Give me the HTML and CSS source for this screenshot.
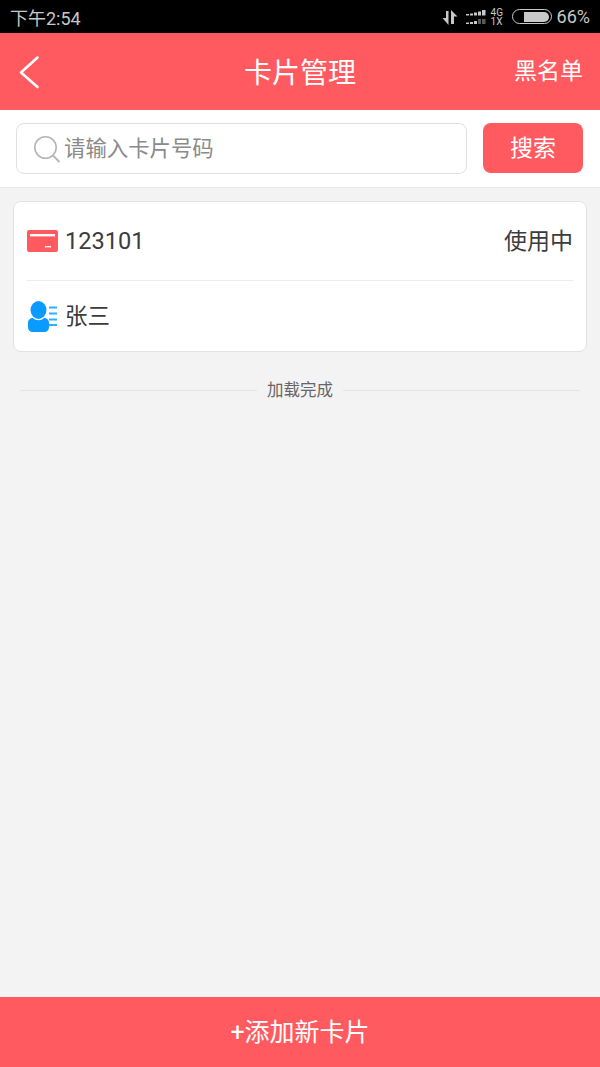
FILE: index.html
```html
<!DOCTYPE html>
<html lang="zh">
<head>
<meta charset="utf-8">
<title>卡片管理</title>
<link rel="stylesheet" href="styles.css">
</head>
<body>
<div class="app">
  <div class="status">
    <span class="time">下午2:54</span>
    <div class="status-right">
      <svg class="ic-data" width="16" height="16" viewBox="0 0 16 16"><path d="M0.500 9h3.500V2h2.500v14zM9 15V1l6.500 6.500H12V15z" fill="#c8c8c8"/></svg>
      <svg class="ic-signal" width="22" height="16" viewBox="0 0 22 16"><g fill="#c8c8c8"><rect x="0" y="5" width="3" height="1.500"/><rect x="4" y="4.500" width="3" height="2"/><rect x="8" y="3.500" width="3" height="3"/><rect x="12" y="2.500" width="3" height="4"/><rect x="16" y="1" width="3.500" height="5.500"/><rect x="0" y="13.500" width="3" height="1.500"/><rect x="4" y="13" width="3" height="2"/><rect x="8" y="12" width="3" height="3"/></g><g fill="#5a5a5a"><rect x="12" y="10" width="3" height="5"/><rect x="16" y="10" width="3.500" height="5"/></g></svg>
      <div class="net"><span>4G</span><span>1X</span></div>
      <div class="battery"><div class="battery-fill"></div></div>
      <span class="pct">66%</span>
    </div>
  </div>
  <header class="nav">
    <svg class="back" width="24" height="34" viewBox="0 0 24 34"><path d="M19.500 2.500 L3 17.500 L19.500 32" fill="none" stroke="#fff" stroke-width="2.600" stroke-linecap="round" stroke-linejoin="round"/></svg>
    <h1 class="title">卡片管理</h1>
    <span class="nav-link">黑名单</span>
  </header>
  <div class="search">
    <div class="search-box">
      <svg class="search-ic" width="28" height="28" viewBox="0 0 28 28"><circle cx="12.500" cy="12.500" r="10.700" fill="none" stroke="#b5b5b5" stroke-width="1.600"/><path d="M20 20.500 L26.500 27" stroke="#b5b5b5" stroke-width="1.800" fill="none"/></svg>
      <span class="placeholder">请输入卡片号码</span>
    </div>
    <button class="search-btn">搜索</button>
  </div>
  <main class="content">
    <section class="card">
      <div class="row row-top">
        <svg class="row-ic" width="31" height="22" viewBox="0 0 31 22"><rect width="31" height="22" rx="2" fill="#ff5a5f"/><rect x="3" y="4" width="25" height="2.400" fill="#fff"/><rect x="18" y="16" width="6" height="1.400" fill="#fff"/></svg>
        <span class="row-text">123101</span>
        <span class="row-state">使用中</span>
      </div>
      <div class="row row-bottom">
        <svg class="row-ic" width="31" height="31" viewBox="0 0 31 31"><g fill="#0a9bff"><ellipse cx="11.500" cy="9" rx="8" ry="9"/><path d="M1 22c0-3 2-5 5-5 3 3 8 3 11 0 3 0 5 2 5 5v4c0 3-2 5-5 5H6c-3 0-5-2-5-5z"/></g><g fill="#2fb0ff"><rect x="22" y="5.500" width="8" height="2"/><rect x="22" y="11.500" width="8" height="2"/><rect x="22" y="17.500" width="8" height="2"/><rect x="22" y="23" width="8" height="2"/></g></svg>
        <span class="row-cn">张三</span>
      </div>
    </section>
    <div class="done"><span class="done-line"></span><span class="done-text">加载完成</span><span class="done-line"></span></div>
  </main>
  <footer class="add">+添加新卡片</footer>
</div>
</body>
</html>
```
FILE: styles.css
```css
* { box-sizing: border-box; }
html, body { margin: 0; padding: 0; }
body { font-family: "Roboto", "Noto Sans CJK SC", sans-serif; }
.app { width: 600px; height: 1067px; display: flex; flex-direction: column; background: #f3f3f3; overflow: hidden; }
.status { height: 33px; background: #000; color: #c8c8c8; display: flex; align-items: center; justify-content: space-between; padding: 0 10px; flex: none; }
.time { font-size: 18px; }
.status-right { display: flex; align-items: center; }
.ic-data { margin-right: 8px; }
.net { display: flex; flex-direction: column; font-size: 10px; line-height: 9px; margin: 0 8px 0 3px; width: 13px; }
.battery { width: 40px; height: 15px; border: 1.500px solid #c8c8c8; border-radius: 8px; padding: 1.500px; margin-right: 5px; display: flex; justify-content: flex-end; }
.battery-fill { width: 25px; background: #c8c8c8; border-radius: 0 5px 5px 0; }
.pct { font-size: 18px; }
.nav { height: 77px; background: #ff5a5f; color: #fff; display: flex; align-items: center; justify-content: space-between; padding: 0 17px 0 18px; flex: none; position: relative; }
.back { display: block; }
.title { position: absolute; left: 0; right: 0; top: 2px; margin: 0; text-align: center; font-size: 28px; font-weight: 400; line-height: 77px; }
.nav-link { font-size: 23px; padding-bottom: 5px; }
.search { height: 78px; background: #fff; border-bottom: 1px solid #e8e8e8; padding: 13px 17px 13px 16px; display: flex; justify-content: space-between; flex: none; }
.search-box { width: 451px; height: 51px; border: 1px solid #e0e0e0; border-radius: 8px; display: flex; align-items: center; padding-left: 16px; }
.search-ic { margin-right: 3px; }
.placeholder { font-size: 21.400px; color: #8a8a8a; padding-bottom: 4px; }
.search-btn { width: 100px; height: 50px; border: 0; border-radius: 8px; background: #ff5a5f; color: #fff; font-family: inherit; font-size: 23px; padding: 0 0 4px; }
.content { flex: 1; padding: 13px 13px 0; }
.card { height: 151px; background: #fff; border: 1px solid #e2e2e2; border-radius: 8px; padding: 0 13px; }
.row { display: flex; align-items: center; color: #3c3c3c; }
.row-top { height: 79px; border-bottom: 1px solid #ececec; }
.row-bottom { height: 70px; }
.row-ic { flex: none; margin-right: 8px; }
.row-text { font-size: 23.600px; margin-left: -1px; }
.row-cn { font-size: 22.500px; margin-left: -1px; padding-bottom: 4px; }
.row-state { font-size: 23px; margin-left: auto; padding-bottom: 5px; }
.done { display: flex; align-items: center; margin: 26px 7px 0; height: 24px; color: #666; }
.done-line { flex: 1; height: 1px; background: #e4e4e4; }
.done-text { font-size: 16.500px; padding: 0 10px 3px; }
.add { height: 70px; background: #ff5a5f; color: #fff; font-size: 25px; padding-bottom: 4px; display: flex; align-items: center; justify-content: center; flex: none; }
```
